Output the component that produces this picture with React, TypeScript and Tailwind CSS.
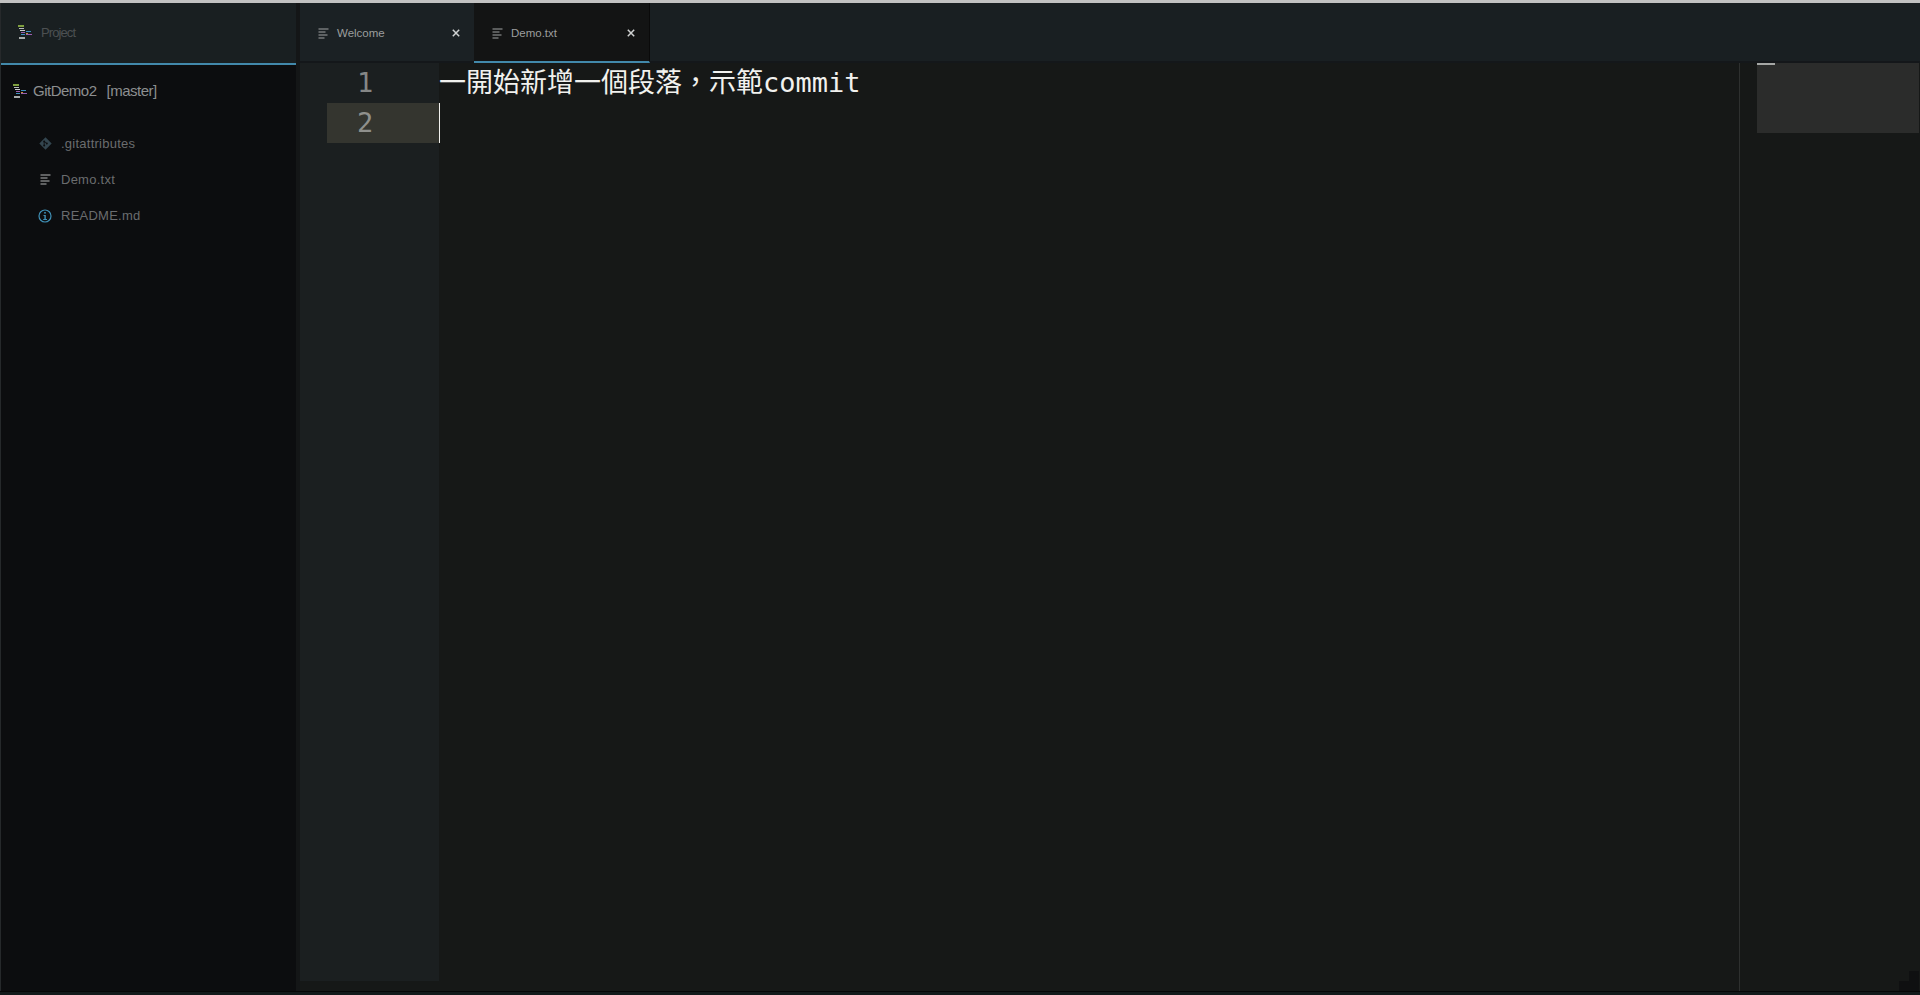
const uiFont = "font-['Liberation_Sans',Arial,sans-serif]";
const codeFont = "font-['DejaVu_Sans_Mono','Noto_Sans_CJK_TC',monospace]";

function TextIcon({ className = "" }: { className?: string }) {
  return (
    <svg width="11" height="11" viewBox="0 0 11 11" className={className}>
      <rect x="0.5" y="0.5" width="10" height="1" fill="currentColor" />
      <rect x="0.5" y="3.5" width="7" height="1" fill="currentColor" />
      <rect x="0.5" y="6.5" width="9" height="1" fill="currentColor" />
      <rect x="0.5" y="9.5" width="6" height="1" fill="currentColor" />
    </svg>
  );
}

function ProjectIcon() {
  return (
    <svg width="15" height="15" viewBox="0 0 15 15" className="shrink-0">
      <rect x="0" y="0" width="6" height="2" fill="#7f9f3f" />
      <rect x="1" y="3" width="5" height="1" fill="#b8bcbc" />
      <rect x="2" y="5" width="5" height="1" fill="#c8cccc" />
      <rect x="8" y="6" width="5" height="1" fill="#3f8fc0" />
      <rect x="3" y="7" width="4" height="1" fill="#9a5fb0" />
      <rect x="3" y="9" width="4" height="1" fill="#3f8fc0" />
      <rect x="8" y="9" width="6" height="1" fill="#9a5fb0" />
      <rect x="8" y="8" width="2" height="1" fill="#c09040" />
      <rect x="1" y="12" width="6" height="2" fill="#a8acac" />
    </svg>
  );
}

function GitIcon() {
  return (
    <svg width="13" height="13" viewBox="0 0 13 13">
      <path d="M6.5 0.3 12.7 6.5 6.5 12.7 0.3 6.5Z" fill="#33454f" />
      <circle cx="5.2" cy="4.4" r="1" fill="#0c0d0f" />
      <circle cx="7.8" cy="6.5" r="1" fill="#0c0d0f" />
      <circle cx="5.2" cy="8.6" r="1" fill="#0c0d0f" />
      <path d="M5.2 4.4V8.6M5.2 4.4 7.8 6.5" stroke="#0c0d0f" strokeWidth="0.8" />
    </svg>
  );
}

function InfoIcon() {
  return (
    <svg width="14" height="14" viewBox="0 0 14 14">
      <circle cx="7" cy="7" r="6" fill="none" stroke="#3f8fb5" strokeWidth="1.2" />
      <rect x="6.2" y="3" width="1.6" height="1.6" fill="#3f8fb5" />
      <path d="M5.5 6H7.8V10H9V11H5.2V10H6.4V7H5.5Z" fill="#3f8fb5" />
    </svg>
  );
}

function CloseIcon() {
  return (
    <svg width="8" height="8" viewBox="0 0 8 8" className="text-[#d0d2d2]">
      <path d="M0.8 0.8 7.2 7.2M7.2 0.8 0.8 7.2" stroke="currentColor" strokeWidth="1.5" />
    </svg>
  );
}

const files = [
  { name: ".gitattributes", icon: <GitIcon /> },
  { name: "Demo.txt", icon: <TextIcon className="text-[#b4b6b6]" /> },
  { name: "README.md", icon: <InfoIcon /> },
];

function Sidebar() {
  return (
    <div className={`flex w-[296px] shrink-0 flex-col border-l border-[#26292b] bg-[#0c0d0f] ${uiFont}`}>
      <div className="flex h-[62px] shrink-0 items-center gap-[8px] border-b-2 border-[#4289ab] bg-[#191f21] pb-[1px] pl-[17px]">
        <ProjectIcon />
        <span className="text-[13px] tracking-[-0.9px] text-[#4c5052]">Project</span>
      </div>
      <div className="flex items-center gap-[5px] pl-[12px] pt-[15px]">
        <ProjectIcon />
        <span className="text-[15px] tracking-[-0.5px] text-[#8d8f90]">GitDemo2</span>
        <span className="ml-[5px] text-[15px] tracking-[-0.5px] text-[#8d8f90]">[master]</span>
      </div>
      <div className="flex flex-col pt-[23px]">
        {files.map((f) => (
          <div key={f.name} className="flex h-[36px] items-center">
            <div className="flex w-[60px] shrink-0 justify-end pr-[8px]">
              <div className="flex w-[16px] justify-center">{f.icon}</div>
            </div>
            <span className="text-[13px] tracking-[0.25px] text-[#6a6c6e]">{f.name}</span>
          </div>
        ))}
      </div>
    </div>
  );
}

function Tab({ name, active }: { name: string; active?: boolean }) {
  return (
    <div
      className={`flex h-[60px] items-center border-b-2 pl-[18px] pr-[14px] pt-[2px] ${
        active
          ? "w-[176px] border-r border-r-[#0a0a0a] border-b-[#4289ab] bg-[#131414]"
          : "w-[174px] border-b-[#14171a] bg-[#1b2124]"
      }`}
    >
      <TextIcon className="text-[#a2a4a4]" />
      <span className="ml-[8px] flex-1 pt-[1px] text-[11.5px] text-[#9c9e9e]">{name}</span>
      <CloseIcon />
    </div>
  );
}

function Editor() {
  return (
    <div className={`flex flex-1 flex-col overflow-hidden bg-[#141617] pl-[4px] ${codeFont}`}>
      <div className={`flex h-[60px] shrink-0 bg-[#191f22] ${uiFont}`}>
        <Tab name="Welcome" />
        <Tab name="Demo.txt" active />
        <div className="flex-1 border-b-2 border-[#14171a]" />
      </div>
      <div className="relative flex min-h-0 flex-1 bg-[#161817]">
        <div className="mb-[10px] w-[139px] shrink-0 bg-[#1b1f20] text-[27px] leading-[40px] text-[#858786]">
          <div className="pl-[57px]">1</div>
          <div className="ml-[27px] bg-[#34352f] pl-[30px] text-[#8f908c]">2</div>
        </div>
        <div className="min-w-0 flex-1 text-[27px] leading-[40px] text-[#f1f1ee]">
          <div className="whitespace-pre">{"一開始新增一個段落\uFF0C示範commit"}</div>
          <div className="h-[40px] border-l border-[#f1f1ee]" />
        </div>
        <div className="flex w-[181px] shrink-0 border-l border-[#2e302f] pl-[17px]">
          <div className="h-[70px] w-[162px] bg-[#2b2c2b]">
            <div className="h-[2px] w-[18px] bg-[#a5a7a5]" />
          </div>
        </div>
        <div className="absolute bottom-0 right-[1px] h-[10px] w-[20px] bg-[#0f1011]" />
        <div className="absolute bottom-[10px] right-[1px] h-[10px] w-[10px] bg-[#0f1011]" />
      </div>
    </div>
  );
}

export default function App() {
  return (
    <div className="flex h-[995px] w-[1920px] flex-col overflow-hidden bg-[#161817]">
      <div className="h-[3px] shrink-0 bg-[#c2c2c2]" />
      <div className="flex min-h-0 flex-1">
        <Sidebar />
        <Editor />
      </div>
      <div className="h-[1px] shrink-0 bg-[#060707]" />
      <div className="h-[3px] shrink-0 bg-[#131a1b]" />
    </div>
  );
}
